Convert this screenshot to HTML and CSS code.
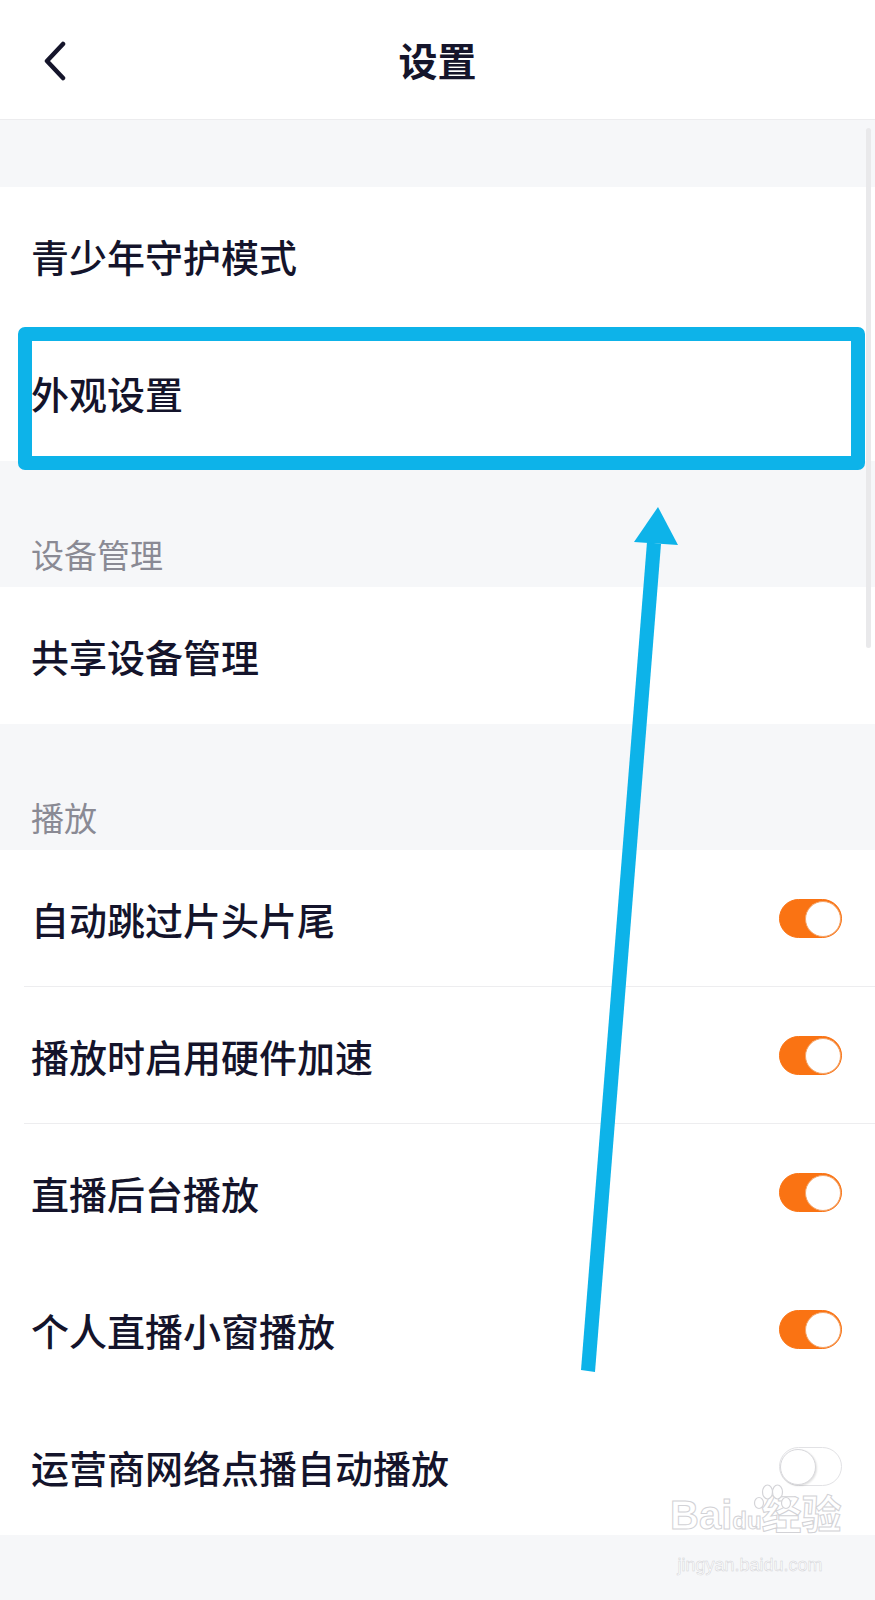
FILE: index.html
```html
<!DOCTYPE html>
<html lang="zh-CN">
<head>
    <meta charset="UTF-8">
    <meta name="viewport" content="width=device-width, initial-scale=1.0">
    <title>设置</title>
    <link rel="stylesheet" href="styles.css">
</head>
<body>
    <div class="screen">
        <!-- Top bar -->
        <header class="topbar">
            <span class="back">
                <svg width="26" height="40" viewBox="0 0 26 40">
                    <polyline points="21,3 5,20 21,37" fill="none" stroke="#15152b" stroke-width="4.5" stroke-linecap="round" stroke-linejoin="round"/>
                </svg>
            </span>
            <h1 class="title">设置</h1>
        </header>

        <div class="gap"></div>

        <div class="row"><span class="label">青少年守护模式</span></div>
        <div class="row"><span class="label">外观设置</span></div>

        <div class="section-title">设备管理</div>
        <div class="row"><span class="label">共享设备管理</span></div>

        <div class="section-title">播放</div>
        <div class="row line">
            <span class="label">自动跳过片头片尾</span>
            <span class="switch on"><span class="knob"></span></span>
        </div>
        <div class="row line">
            <span class="label">播放时启用硬件加速</span>
            <span class="switch on"><span class="knob"></span></span>
        </div>
        <div class="row">
            <span class="label">直播后台播放</span>
            <span class="switch on"><span class="knob"></span></span>
        </div>
        <div class="row">
            <span class="label">个人直播小窗播放</span>
            <span class="switch on"><span class="knob"></span></span>
        </div>
        <div class="row">
            <span class="label">运营商网络点播自动播放</span>
            <span class="switch"><span class="knob"></span></span>
        </div>

        <div class="bottom"></div>

        <!-- Overlays: scrollbar, annotation, watermark -->
        <div class="scrollbar"></div>
        <div class="mark-box"></div>
        <svg class="mark-arrow" width="875" height="1600" viewBox="0 0 875 1600">
            <polygon points="581,1370 595,1372 661,544 647,542" fill="#0db3e9"/>
            <polygon points="658,507 634,542 678,545" fill="#0db3e9"/>
        </svg>
        <div class="watermark">
            <svg class="wm-paw" width="40" height="26" viewBox="0 0 40 26">
                <g fill="#fff" stroke="#d4d4d8" stroke-width="1.2">
                    <ellipse cx="7" cy="19" rx="4.5" ry="5.5"/>
                    <ellipse cx="15.5" cy="8" rx="5" ry="7"/>
                    <ellipse cx="25.5" cy="8" rx="5" ry="7"/>
                    <ellipse cx="34" cy="19" rx="4.5" ry="5.5"/>
                </g>
            </svg>
            <div class="wm-logo">Bai<span class="paw">du</span>经验</div>
            <div class="wm-url">jingyan.baidu.com</div>
        </div>
    </div>
</body>
</html>
```

FILE: styles.css
```css
body {
    margin: 0;
    padding: 0;
    background-color: #f6f7f9;
    font-family: "Noto Sans CJK SC", "Noto Sans", sans-serif;
    color: #14142b;
}

.screen {
    position: relative;
    width: 875px;
    height: 1600px;
    overflow: hidden;
    background-color: #f6f7f9;
}

.topbar {
    height: 119px;
    background-color: #fff;
    border-bottom: 1px solid #ececee;
    display: flex;
    align-items: center;
    justify-content: center;
    position: relative;
}

.back {
    position: absolute;
    left: 42px;
    top: 41px;
    display: flex;
}

.title {
    margin: 0;
    font-size: 39px;
    font-weight: 700;
    line-height: 1;
    color: #15152b;
}

.gap {
    height: 67px;
}

.row {
    position: relative;
    height: 137px;
    padding: 0 33px 0 31px;
    background-color: #fff;
    display: flex;
    align-items: center;
    justify-content: space-between;
}

.row.line::after {
    content: "";
    position: absolute;
    left: 24px;
    right: 0;
    bottom: 0;
    height: 1px;
    background-color: #ededef;
}

.label {
    font-size: 38px;
    font-weight: 500;
    line-height: 1;
}

.section-title {
    height: 126px;
    box-sizing: border-box;
    padding: 71px 31px 0;
    font-size: 33px;
    line-height: 44px;
    color: #8a8a94;
}

.switch {
    width: 63px;
    height: 39px;
    box-sizing: border-box;
    border-radius: 20px;
    background-color: #fff;
    border: 1.5px solid #e2e2e5;
    display: flex;
    align-items: center;
    justify-content: flex-start;
}

.switch .knob {
    width: 36px;
    height: 36px;
    box-sizing: border-box;
    border-radius: 50%;
    background-color: #fff;
    border: 1.5px solid #d8d8dc;
    box-shadow: 1px 1px 2px rgba(0, 0, 0, 0.12);
}

.switch.on {
    background-color: #fa7313;
    border-color: #fa7313;
    justify-content: flex-end;
}

.switch.on .knob {
    border: 1px solid #f3a56a;
    box-shadow: none;
}

.bottom {
    height: 64px;
}

.scrollbar {
    position: absolute;
    left: 866px;
    top: 128px;
    width: 5px;
    height: 520px;
    border-radius: 3px;
    background-color: #e9e9eb;
}

/* Annotation */
.mark-box {
    position: absolute;
    left: 18px;
    top: 327px;
    width: 847px;
    height: 143px;
    box-sizing: border-box;
    border: 14px solid #0db3e9;
    border-radius: 7px;
}

.mark-arrow {
    position: absolute;
    left: 0;
    top: 0;
    pointer-events: none;
}

.watermark {
    position: absolute;
    left: 670px;
    top: 1490px;
    width: 160px;
    font-family: "Liberation Sans", "Noto Sans CJK SC", sans-serif;
    color: #fff;
    -webkit-text-stroke: 1px #d2d2d6;
    text-align: center;
}

.wm-paw {
    position: absolute;
    left: 82px;
    top: -6px;
}

.wm-logo {
    font-size: 40px;
    font-weight: 700;
    line-height: 50px;
    white-space: nowrap;
}

.wm-logo .paw {
    font-size: 24px;
}

.wm-url {
    margin-top: 8px;
    font-size: 18px;
    line-height: 22px;
    -webkit-text-stroke: 0.5px #d2d2d6;
}
```
